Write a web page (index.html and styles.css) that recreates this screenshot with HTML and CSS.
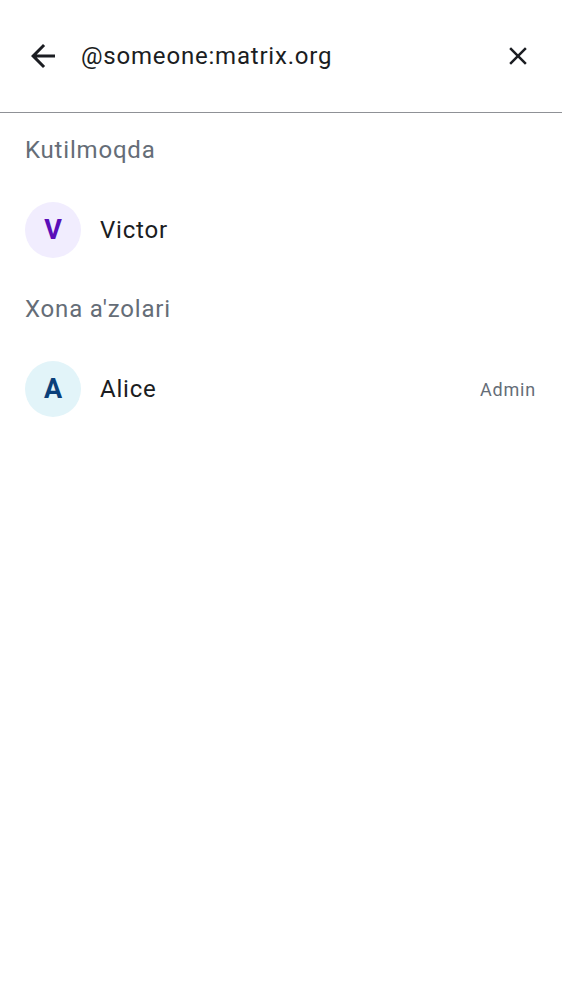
FILE: index.html
```html
<!DOCTYPE html>
<html lang="uz">
<head>
<meta charset="utf-8">
<link rel="stylesheet" href="styles.css">
</head>
<body>
<div class="screen">
  <header class="topbar">
    <button class="icon-btn back" aria-label="Back">
      <svg width="36" height="36" viewBox="0 0 24 24"><path d="M20 11H7.83l5.59-5.59L12 4l-8 8 8 8 1.41-1.41L7.83 13H20v-2z" fill="#1b1d22"/></svg>
    </button>
    <div class="query">@someone:matrix.org</div>
    <button class="icon-btn close" aria-label="Clear">
      <svg width="30" height="30" viewBox="0 0 24 24"><path d="M19 6.41 17.59 5 12 10.59 6.41 5 5 6.41 10.59 12 5 17.59 6.41 19 12 13.41 17.59 19 19 17.59 13.41 12z" fill="#1b1d22"/></svg>
    </button>
  </header>
  <section class="group">
    <div class="group-title">Kutilmoqda</div>
    <div class="member">
      <div class="avatar avatar-v">V</div>
      <div class="name">Victor</div>
    </div>
  </section>
  <section class="group">
    <div class="group-title">Xona a'zolari</div>
    <div class="member">
      <div class="avatar avatar-a">A</div>
      <div class="name">Alice</div>
      <div class="role">Admin</div>
    </div>
  </section>
</div>
</body>
</html>
```

FILE: styles.css
```css
* { box-sizing: border-box; }
html, body { margin: 0; padding: 0; background: #ffffff; }
body {
  font-family: Roboto, "Noto Sans", sans-serif;
  color: #1b1d22;
}
.screen { width: 562px; min-height: 1000px; }
.topbar {
  height: 113px;
  display: flex;
  align-items: center;
  padding: 0 29px 1px 25px;
  border-bottom: 1px solid #8f9196;
}
.icon-btn {
  width: 36px; height: 36px;
  border: 0; background: none; padding: 0;
  display: flex; align-items: center; justify-content: center;
}
.back { margin-right: 20px; }
.close { width: 30px; height: 30px; }
.query {
  flex: 1;
  font-size: 24px;
  letter-spacing: 0.8px;
  color: #1b1d22;
}
.group-title {
  height: 75px;
  padding: 23px 25px 0;
  font-size: 24px;
  line-height: 28px;
  letter-spacing: 0.8px;
  color: #656d77;
}
.member {
  height: 84px;
  display: flex;
  align-items: center;
  padding: 0 26px 0 25px;
}
.avatar {
  width: 56px; height: 56px;
  border-radius: 50%;
  display: flex; align-items: center; justify-content: center;
  font-size: 27px; font-weight: 700;
  margin-right: 19px;
}
.avatar-v { background: #f1edfe; color: #5a0fb8; }
.avatar-a { background: #e2f4f9; color: #0a3f7a; }
.name { flex: 1; font-size: 24px; letter-spacing: 0.8px; color: #1b1d22; }
.role { font-size: 18px; color: #656d77; letter-spacing: 0.8px; }
```
